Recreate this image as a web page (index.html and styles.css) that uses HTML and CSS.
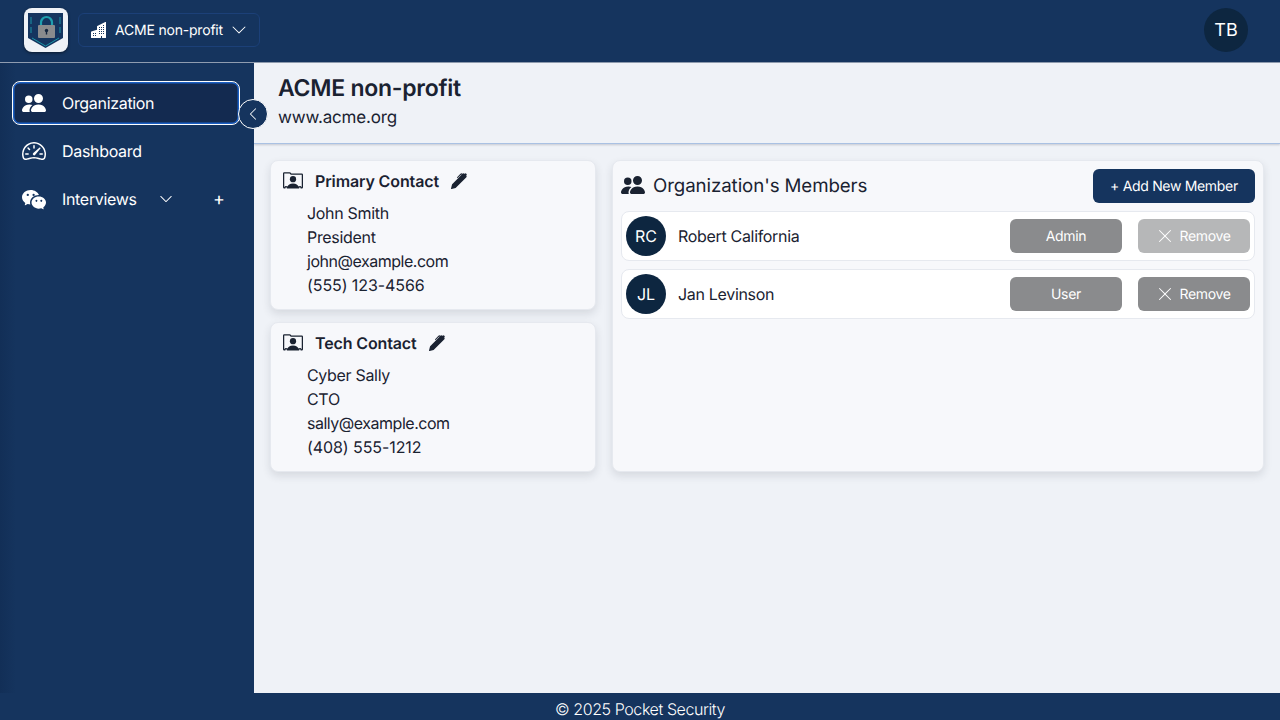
FILE: index.html
```html
<!DOCTYPE html>
<html>
<head>
  <title>Organization</title>
  <link rel="stylesheet" href="styles.css">
</head>
<body>
  <svg class="icon-defs" width="0" height="0">
    <defs>
      <symbol id="i-people" viewBox="0 0 16 16"><path d="M7 14s-1 0-1-1 1-4 5-4 5 3 5 4-1 1-1 1H7Zm4-6a3 3 0 1 0 0-6 3 3 0 0 0 0 6Zm-5.784 6A2.238 2.238 0 0 1 5 13c0-1.355.68-2.75 1.936-3.72A6.325 6.325 0 0 0 5 9c-4 0-5 3-5 4s1 1 1 1h4.216ZM4.5 8a2.5 2.5 0 1 0 0-5 2.5 2.5 0 0 0 0 5Z"/></symbol>
      <symbol id="i-chevron" viewBox="0 0 16 16"><path fill-rule="evenodd" d="M1.646 4.646a.5.5 0 0 1 .708 0L8 10.293l5.646-5.647a.5.5 0 0 1 .708.708l-6 6a.5.5 0 0 1-.708 0l-6-6a.5.5 0 0 1 0-.708z"/></symbol>
      <symbol id="i-contact" viewBox="0 0 16 16"><path d="M8 9.05a2.5 2.5 0 1 0 0-5 2.5 2.5 0 0 0 0 5Z"/><path d="M1 1a1 1 0 0 0-1 1v11a1 1 0 0 0 1 1h.5a.5.5 0 0 0 .5-.5.5.5 0 0 1 1 0 .5.5 0 0 0 .5.5h9a.5.5 0 0 0 .5-.5.5.5 0 0 1 1 0 .5.5 0 0 0 .5.5h.5a1 1 0 0 0 1-1V3a1 1 0 0 0-1-1H6.707L6 1.293A1 1 0 0 0 5.293 1H1Zm0 1h4.293L6 2.707A1 1 0 0 0 6.707 3H15v10h-.085a1.5 1.5 0 0 0-2.4-.63C11.885 11.223 10.554 10 8 10c-2.555 0-3.886 1.224-4.514 2.37a1.5 1.5 0 0 0-2.4.63H1V2Z"/></symbol>
      <symbol id="i-pen" viewBox="0 0 16 16"><path d="m13.498.795.149-.149a1.207 1.207 0 1 1 1.707 1.708l-.149.148a1.5 1.5 0 0 1-.059 2.059L4.854 14.854a.5.5 0 0 1-.233.131l-4 1a.5.5 0 0 1-.606-.606l1-4a.5.5 0 0 1 .131-.232l9.642-9.642a.5.5 0 0 0-.642.056L6.854 4.854a.5.5 0 1 1-.708-.708L9.44.854A1.5 1.5 0 0 1 11.5.796a1.5 1.5 0 0 1 1.998-.001Z"/></symbol>
      <symbol id="i-x" viewBox="0 0 16 16"><path d="M2.146 2.854a.5.5 0 1 1 .708-.708L8 7.293l5.146-5.147a.5.5 0 0 1 .708.708L8.707 8l5.147 5.146a.5.5 0 0 1-.708.708L8 8.707l-5.146 5.147a.5.5 0 0 1-.708-.708L7.293 8 2.146 2.854Z"/></symbol>
    </defs>
  </svg>

  <header class="topbar">
    <div class="logo">
      <svg viewBox="0 0 44 44" width="44" height="44">
        <path d="M4 5h35v25l-17.500 10-17.500-10z" fill="#15355f"/>
        <path d="M7 9v7M7 19v6M36 9v7M36 19v6M8 30l13.500 8 13.500-8" fill="none" stroke="#1b96a8" stroke-width="1"/>
        <path d="M17 18v-3.500a5.500 5.500 0 0 1 11 0v3.500" fill="none" stroke="#1f9fae" stroke-width="2.200"/>
        <rect x="14" y="17" width="17" height="13" rx="1" fill="#8a8b8d"/>
        <circle cx="22.500" cy="22.500" r="1.700" fill="#15263f"/>
        <rect x="21.800" y="22.500" width="1.400" height="4" fill="#15263f"/>
      </svg>
    </div>
    <button class="org-select">
      <svg class="org-icon" viewBox="0 0 16 16"><path d="M15 .5a.5.5 0 0 0-.724-.447l-8 4A.5.5 0 0 0 6 4.5v3.14L.342 9.526A.5.5 0 0 0 0 10v5.5a.5.5 0 0 0 .5.5h9a.5.5 0 0 0 .5-.5V14h1v1.5a.5.5 0 0 0 .5.5h3a.5.5 0 0 0 .5-.5V.5ZM2 11h1v1H2v-1Zm2 0h1v1H4v-1Zm-1 2v1H2v-1h1Zm1 0h1v1H4v-1Zm9-10v1h-1V3h1ZM8 5h1v1H8V5Zm1 2v1H8V7h1ZM8 9h1v1H8V9Zm2 0h1v1h-1V9Zm-1 2v1H8v-1h1Zm1 0h1v1h-1v-1Zm3-2v1h-1V9h1Zm-1 2h1v1h-1v-1Zm-2-4h1v1h-1V7Zm3 0v1h-1V7h1Zm-2-2v1h-1V5h1Zm1 0h1v1h-1V5Z"/></svg>
      <span>ACME non-profit</span>
      <svg class="org-chevron"><use href="#i-chevron"/></svg>
    </button>
    <div class="avatar avatar-user">TB</div>
  </header>

  <div class="layout">
    <nav class="sidebar">
      <a class="nav-item active">
        <svg class="nav-icon"><use href="#i-people"/></svg>
        <span>Organization</span>
      </a>
      <a class="nav-item">
        <svg class="nav-icon" viewBox="0 0 16 16"><path d="M8 4a.5.5 0 0 1 .5.5V6a.5.5 0 0 1-1 0V4.5A.5.5 0 0 1 8 4zM3.732 5.732a.5.5 0 0 1 .707 0l.915.914a.5.5 0 1 1-.708.708l-.914-.915a.5.5 0 0 1 0-.707zM2 10a.5.5 0 0 1 .5-.5h1.586a.5.5 0 0 1 0 1H2.5A.5.5 0 0 1 2 10zm9.5 0a.5.5 0 0 1 .5-.5h1.5a.5.5 0 0 1 0 1H12a.5.5 0 0 1-.5-.5zm.754-4.246a.389.389 0 0 0-.527-.02L7.547 9.31a.91.91 0 1 0 1.302 1.258l3.434-4.297a.389.389 0 0 0-.029-.518z"/><path fill-rule="evenodd" d="M0 10a8 8 0 1 1 15.547 2.661c-.442 1.253-1.845 1.602-2.932 1.25C11.309 13.488 9.475 13 8 13c-1.474 0-3.31.488-4.615.911-1.087.352-2.49.003-2.932-1.25A7.988 7.988 0 0 1 0 10zm8-7a7 7 0 0 0-6.603 9.329c.203.575.923.876 1.68.63C4.397 12.533 6.358 12 8 12s3.604.532 4.923.96c.757.245 1.477-.056 1.68-.631A7 7 0 0 0 8 3z"/></svg>
        <span>Dashboard</span>
      </a>
      <a class="nav-item">
        <svg class="nav-icon" viewBox="0 0 16 16"><path d="M11.176 14.429c-2.665 0-4.826-1.8-4.826-4.018 0-2.22 2.159-4.02 4.824-4.02S16 8.191 16 10.411c0 1.21-.65 2.301-1.666 3.036a.324.324 0 0 0-.12.366l.218.81a.616.616 0 0 1 .029.117.166.166 0 0 1-.162.162.177.177 0 0 1-.092-.03l-1.057-.61a.519.519 0 0 0-.256-.074.509.509 0 0 0-.142.021 5.668 5.668 0 0 1-1.576.22ZM9.064 9.542a.647.647 0 1 0 .557-1 .645.645 0 0 0-.646.647.615.615 0 0 0 .09.353Zm3.232.001a.646.646 0 1 0 .546-1 .645.645 0 0 0-.644.644.627.627 0 0 0 .098.356Z"/><path d="M0 6.826c0 1.455.781 2.765 2.001 3.656a.385.385 0 0 1 .143.439l-.161.6-.1.373a.499.499 0 0 0-.032.14.192.192 0 0 0 .193.193c.039 0 .077-.01.111-.029l1.268-.733a.622.622 0 0 1 .308-.088c.058 0 .116.009.171.025a6.83 6.83 0 0 0 1.625.26 4.45 4.45 0 0 1-.177-1.251c0-2.936 2.785-5.02 5.824-5.02.05 0 .1 0 .15.002C10.587 3.429 8.392 2 5.796 2 2.596 2 0 4.16 0 6.826Zm4.632-1.555a.77.77 0 1 1-1.54 0 .77.77 0 0 1 1.54 0Zm3.875 0a.77.77 0 1 1-1.54 0 .77.77 0 0 1 1.54 0Z"/></svg>
        <span class="nav-label">Interviews</span>
        <svg class="nav-chevron"><use href="#i-chevron"/></svg>
        <span class="nav-plus">+</span>
      </a>
      <button class="collapse-btn">
        <svg viewBox="0 0 16 16"><path fill-rule="evenodd" d="M11.354 1.646a.5.5 0 0 1 0 .708L5.707 8l5.647 5.646a.5.5 0 0 1-.708.708l-6-6a.5.5 0 0 1 0-.708l6-6a.5.5 0 0 1 .708 0z"/></svg>
      </button>
    </nav>

    <main class="content">
      <div class="page-head">
        <h1>ACME non-profit</h1>
        <p>www.acme.org</p>
      </div>

      <div class="page-body">
        <div class="contacts">
          <section class="card contact-card">
            <h3>
              <svg class="contact-icon"><use href="#i-contact"/></svg>
              <span>Primary Contact</span>
              <svg class="pen-icon"><use href="#i-pen"/></svg>
            </h3>
            <p>John Smith</p>
            <p>President</p>
            <p class="email">john@example.com</p>
            <p class="phone">(555) 123-4566</p>
          </section>
          <section class="card contact-card">
            <h3>
              <svg class="contact-icon"><use href="#i-contact"/></svg>
              <span>Tech Contact</span>
              <svg class="pen-icon"><use href="#i-pen"/></svg>
            </h3>
            <p>Cyber Sally</p>
            <p>CTO</p>
            <p class="email">sally@example.com</p>
            <p class="phone">(408) 555-1212</p>
          </section>
        </div>

        <section class="card members">
          <div class="members-head">
            <h2>
              <svg class="members-icon"><use href="#i-people"/></svg>
              <span>Organization's Members</span>
            </h2>
            <button class="add-btn">+ Add New Member</button>
          </div>
          <div class="member-row">
            <div class="avatar">RC</div>
            <span class="member-name">Robert California</span>
            <button class="gray-btn role-btn">Admin</button>
            <button class="gray-btn remove-btn disabled"><svg><use href="#i-x"/></svg>Remove</button>
          </div>
          <div class="member-row">
            <div class="avatar">JL</div>
            <span class="member-name">Jan Levinson</span>
            <button class="gray-btn role-btn">User</button>
            <button class="gray-btn remove-btn"><svg><use href="#i-x"/></svg>Remove</button>
          </div>
        </section>
      </div>
    </main>
  </div>

  <footer class="footer">© 2025 Pocket Security</footer>
</body>
</html>
```

FILE: styles.css
```css
* {
  box-sizing: border-box;
}

html,
body {
  height: 100%;
}

body {
  margin: 0;
  display: flex;
  flex-direction: column;
  font-family: Inter, "Liberation Sans", sans-serif;
  font-size: 16px;
  letter-spacing: -0.02em;
  color: #1a2231;
  background-color: #eff2f7;
  overflow: hidden;
  text-rendering: geometricPrecision;
}

button {
  font-family: inherit;
  letter-spacing: inherit;
  text-rendering: inherit;
  border: none;
  cursor: pointer;
}

svg {
  fill: currentColor;
  display: block;
  flex-shrink: 0;
}

.icon-defs {
  position: absolute;
}

/* top bar */
.topbar {
  height: 63px;
  flex-shrink: 0;
  display: flex;
  align-items: center;
  padding: 0 32px 2px 24px;
  background-color: #15345e;
  border-bottom: 1px solid #8f9cb0;
  color: #fff;
}

.logo {
  width: 44px;
  height: 44px;
  border-radius: 8px;
  background-color: #eff2f7;
  box-shadow: 0 1px 3px rgba(0, 0, 0, 0.5);
  overflow: hidden;
}

.org-select {
  width: 182px;
  height: 34px;
  margin-left: 10px;
  display: flex;
  align-items: center;
  padding: 0 12px;
  background-color: #15345e;
  border: 1px solid #1c4078;
  border-radius: 6px;
  color: #fff;
  font-size: 14px;
  letter-spacing: -0.2px;
  white-space: nowrap;
}

.org-icon {
  width: 16px;
  height: 16px;
}

.org-select span {
  margin-left: 8px;
}

.org-chevron {
  width: 16px;
  height: 16px;
  margin-left: auto;
}

.avatar {
  width: 40px;
  height: 40px;
  border-radius: 50%;
  flex-shrink: 0;
  display: flex;
  align-items: center;
  justify-content: center;
  background-color: #0d2640;
  color: #fff;
  font-size: 16px;
  letter-spacing: 0;
}

.avatar-user {
  width: 44px;
  height: 44px;
  margin-left: auto;
  font-size: 18px;
}

/* sidebar */
.layout {
  flex: 1;
  display: flex;
  min-height: 0;
}

.sidebar {
  position: relative;
  width: 254px;
  flex-shrink: 0;
  padding: 18px 14px 0 12px;
  display: flex;
  flex-direction: column;
  gap: 4px;
  background: linear-gradient(to right, #122f57, #15345e 16px);
  color: #fff;
}

.nav-item {
  height: 44px;
  display: flex;
  align-items: center;
  padding: 0 10px;
  border-radius: 8px;
}

.nav-item.active {
  background-color: #132a50;
  border: 1px solid #fff;
  box-shadow: inset 0 0 0 1.5px #1a5fc4;
  padding: 0 9px;
}

.nav-icon {
  width: 24px;
  height: 24px;
  margin-right: 16px;
}

.nav-label {
  width: 97px;
}

.nav-chevron {
  width: 14px;
  height: 14px;
}

.nav-plus {
  margin-left: 40px;
  font-size: 18px;
}

.collapse-btn {
  position: absolute;
  top: 36px;
  right: -14px;
  width: 30px;
  height: 30px;
  padding: 0;
  display: flex;
  align-items: center;
  justify-content: center;
  border-radius: 50%;
  border: 1px solid #fff;
  background-color: #15345e;
  color: #fff;
}

.collapse-btn svg {
  width: 14px;
  height: 14px;
}

/* content */
.content {
  flex: 1;
  min-width: 0;
}

.page-head {
  height: 81px;
  padding: 10px 24px 0;
  border-bottom: 1px solid #a9c1e3;
  box-shadow: 0 1px 2px rgba(30, 40, 60, 0.2);
}

.page-head h1 {
  margin: 0;
  font-size: 23px;
  line-height: 30px;
  font-weight: 600;
  letter-spacing: -0.26px;
}

.page-head p {
  margin: 2px 0 0;
  font-size: 17px;
  line-height: 26px;
  letter-spacing: -0.17px;
}

.page-body {
  display: flex;
  gap: 16px;
  padding: 16px 16px 0;
}

.contacts {
  width: 326px;
  flex-shrink: 0;
  display: flex;
  flex-direction: column;
  gap: 12px;
}

.card {
  background-color: #f7f8fb;
  border: 1px solid #e6e9ef;
  border-radius: 8px;
  box-shadow: 0 4px 8px rgba(30, 40, 60, 0.12);
}

.contact-card {
  height: 150px;
  padding: 8px 12px;
}

.contact-card h3 {
  margin: 0 0 8px;
  display: flex;
  align-items: center;
  font-size: 16px;
  line-height: 24px;
  font-weight: 600;
  letter-spacing: -0.13px;
}

.contact-icon {
  width: 20px;
  height: 20px;
  margin-right: 12px;
}

.pen-icon {
  width: 16px;
  height: 16px;
  margin-left: 12px;
}

.contact-card p {
  margin: 0 0 0 24px;
  line-height: 24px;
}

.contact-card .email {
  letter-spacing: -0.48px;
}

.contact-card .phone {
  letter-spacing: -0.08px;
}

/* members */
.members {
  flex: 1;
  height: 312px;
  padding: 8px;
}

.members-head {
  display: flex;
  align-items: center;
  justify-content: space-between;
  margin-bottom: 8px;
}

.members-head h2 {
  margin: 0 0 2px;
  display: flex;
  align-items: center;
  font-size: 18.72px;
  font-weight: 400;
  letter-spacing: -0.1px;
}

.members-icon {
  width: 24px;
  height: 24px;
  margin-right: 8px;
}

.add-btn {
  width: 162px;
  height: 34px;
  border-radius: 6px;
  background-color: #15345e;
  color: #fff;
  font-size: 14px;
}

.member-row {
  height: 50px;
  margin-bottom: 8px;
  display: flex;
  align-items: center;
  padding: 0 4px;
  background-color: #fff;
  border: 1px solid #e6e9ef;
  border-radius: 8px;
}

.member-name {
  flex: 1;
  margin-left: 12px;
}

.gray-btn {
  width: 112px;
  height: 34px;
  border-radius: 6px;
  display: flex;
  align-items: center;
  justify-content: center;
  background-color: #8a8b8d;
  color: #fff;
  font-size: 14px;
}

.remove-btn {
  margin-left: 16px;
}

.remove-btn svg {
  width: 16px;
  height: 16px;
  margin-right: 6px;
}

.remove-btn.disabled {
  background-color: #b6b7b8;
}

.footer {
  height: 27px;
  flex-shrink: 0;
  line-height: 32px;
  text-align: center;
  font-weight: 300;
  letter-spacing: -0.41px;
  background-color: #15345e;
  color: #fff;
}
```
